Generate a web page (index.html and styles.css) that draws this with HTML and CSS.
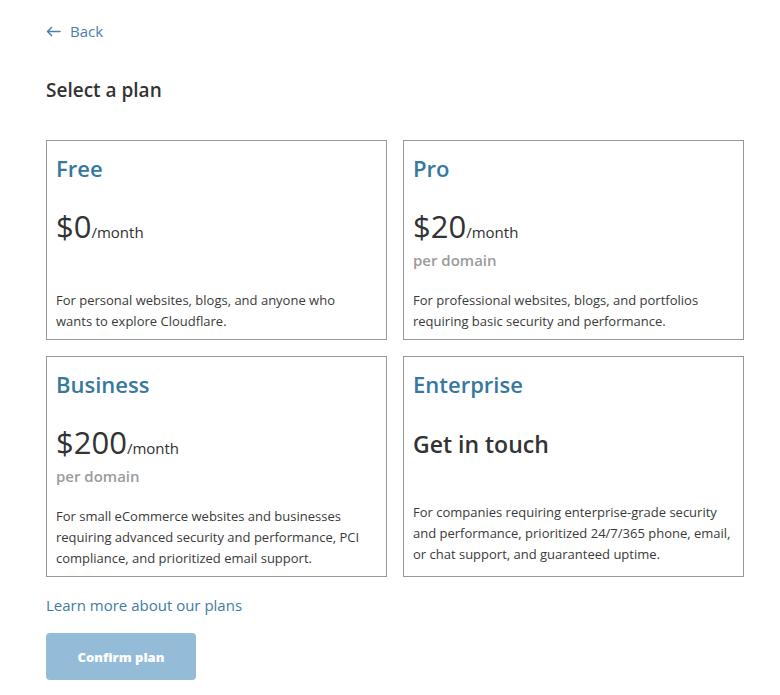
FILE: index.html
```html
<!DOCTYPE html>
<html lang="en">
<head>
<meta charset="utf-8">
<title>Select a plan</title>
<link rel="stylesheet" href="styles.css">
</head>
<body>
<div class="page">
  <a class="back" href="#">
    <svg class="back-icon" width="15" height="11" viewBox="0 0 15 11" aria-hidden="true">
      <path d="M14 5.5H1.5M5.5 1.5L1.5 5.5L5.5 9.5" fill="none" stroke="currentColor" stroke-width="1.5" stroke-linecap="round" stroke-linejoin="round"/>
    </svg>
    <span>Back</span>
  </a>
  <h1 class="heading">Select a plan</h1>
  <div class="plans">
    <div class="card">
      <div class="plan-name">Free</div>
      <div class="price"><span class="amount">$0</span><span class="period">/month</span></div>
      <p class="desc">For personal websites, blogs, and anyone who wants to explore Cloudflare.</p>
    </div>
    <div class="card">
      <div class="plan-name">Pro</div>
      <div class="price"><span class="amount">$20</span><span class="period">/month</span></div>
      <div class="per">per domain</div>
      <p class="desc">For professional websites, blogs, and portfolios requiring basic security and performance.</p>
    </div>
    <div class="card">
      <div class="plan-name">Business</div>
      <div class="price"><span class="amount">$200</span><span class="period">/month</span></div>
      <div class="per">per domain</div>
      <p class="desc">For small eCommerce websites and businesses requiring advanced security and performance, PCI compliance, and prioritized email support.</p>
    </div>
    <div class="card card-enterprise">
      <div class="plan-name">Enterprise</div>
      <div class="touch">Get in touch</div>
      <p class="desc">For companies requiring enterprise-grade security and performance, prioritized 24/7/365 phone, email, or chat support, and guaranteed uptime.</p>
    </div>
  </div>
  <a class="learn" href="#">Learn more about our plans</a>
  <button class="confirm" type="button">Confirm plan</button>
</div>
</body>
</html>
```
FILE: styles.css
```css
* { box-sizing: border-box; }
html, body { margin: 0; padding: 0; background: #fff; }
body {
  font-family: "Open Sans", "Noto Sans", sans-serif;
  color: #333;
}
.page {
  width: 744px;
  padding: 21px 0 0 46px;
  display: flex;
  flex-direction: column;
  align-items: flex-start;
}
.back {
  display: flex;
  align-items: center;
  gap: 9px;
  color: #4a80a9;
  text-decoration: none;
  font-size: 15px;
  line-height: 20px;
}
.back-icon { display: block; }
.heading {
  margin: 36px 0 0;
  font-size: 19px;
  line-height: 26px;
  font-weight: 600;
  color: #333;
}
.plans {
  margin-top: 37px;
  width: 698px;
  display: grid;
  grid-template-columns: 341px 341px;
  gap: 16px;
}
.card {
  border: 1px solid #999;
  padding: 13px 5px 7px 9px;
  display: flex;
  flex-direction: column;
}
.plan-name {
  font-size: 22px;
  line-height: 28px;
  font-weight: 600;
  color: #37789f;
}
.price {
  margin-top: 24px;
  height: 40px;
  display: flex;
  align-items: baseline;
  white-space: nowrap;
}
.amount {
  font-size: 31px;
  line-height: 40px;
  color: #333;
}
.period {
  font-size: 15px;
  line-height: 20px;
  font-weight: 500;
  color: #2f2f2f;
}
.per {
  margin-top: 4px;
  font-size: 15px;
  line-height: 20px;
  font-weight: 600;
  color: #9b9b9b;
}
.touch {
  margin-top: 26px;
  font-size: 23px;
  line-height: 40px;
  font-weight: 600;
  color: #333;
}
.desc {
  margin: auto 0 0;
  padding-top: 20px;
  padding-right: 9px;
  font-size: 13px;
  line-height: 21px;
  color: #3a3a3a;
}
.card-enterprise .desc { margin-bottom: 4px; padding-right: 0; }
.learn {
  margin-top: 18px;
  font-size: 15px;
  line-height: 20px;
  color: #3f7ba5;
  text-decoration: none;
}
.confirm {
  margin-top: 18px;
  width: 150px;
  height: 47px;
  border: 0;
  border-radius: 4px;
  background: #94bcd9;
  color: #fff;
  font-family: "Open Sans", "Noto Sans", sans-serif;
  font-size: 13px;
  font-weight: 800;
  padding: 0;
}
```
